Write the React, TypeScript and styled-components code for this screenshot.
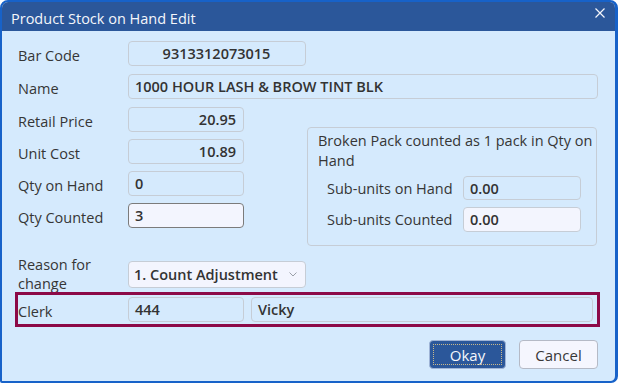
import React from "react";
import styled, { createGlobalStyle } from "styled-components";

const GlobalStyle = createGlobalStyle`
  html, body {
    margin: 0;
    padding: 0;
    background: #ffffff;
  }
  * {
    box-sizing: border-box;
  }
`;

const Window = styled.div`
  width: 618px;
  height: 383px;
  display: flex;
  flex-direction: column;
  border: 2px solid #1762c9;
  border-right-width: 3px;
  border-radius: 8px 8px 7px 2px;
  overflow: hidden;
  background: #d5eafd;
  font-family: "Open Sans", "Noto Sans", sans-serif;
  font-size: 14.5px;
  color: #363636;
`;

const TitleBar = styled.div`
  height: 29px;
  flex: none;
  display: flex;
  align-items: center;
  justify-content: space-between;
  padding: 4px 8px 0 9px;
  background: #2b579a;
  color: #f4f6fb;
  font-size: 14.5px;
`;

const CloseButton = styled.div`
  width: 14px;
  height: 14px;
  display: flex;
  align-items: center;
  justify-content: center;
  margin-top: -12px;
`;

const Body = styled.div`
  flex: 1;
  display: flex;
  flex-direction: column;
  padding: 10px 17px 0 16px;
`;

const Row = styled.div<{ $mt?: number }>`
  display: flex;
  align-items: center;
  gap: 7px;
  margin-top: ${(p) => p.$mt ?? 0}px;
`;

const Label = styled.div<{ $width?: number }>`
  width: ${(p) => p.$width ?? 110}px;
  margin-right: -7px;
  flex: none;
  line-height: 19px;
  padding-top: 3px;
`;

const Field = styled.div<{
  $width?: number;
  $align?: "left" | "center" | "right";
  $editable?: boolean;
  $focused?: boolean;
  $height?: number;
}>`
  width: ${(p) => (p.$width ? `${p.$width}px` : "auto")};
  flex: ${(p) => (p.$width ? "none" : "1")};
  height: ${(p) => p.$height ?? 25}px;
  display: flex;
  align-items: center;
  justify-content: ${(p) =>
    p.$align === "center" ? "center" : p.$align === "right" ? "flex-end" : "flex-start"};
  padding: 0 7px 0 6px;
  border: 1px solid ${(p) => (p.$focused ? "#7b7b7b" : "#c6cdd6")};
  border-radius: 4px;
  background: ${(p) => (p.$editable ? "#f3f5fe" : "#d5eafd")};
  font-weight: 600;
  color: #333333;
`;

const Split = styled.div`
  display: flex;
  align-items: flex-start;
  margin-top: 8px;
`;

const Column = styled.div`
  width: 226px;
  display: flex;
  flex-direction: column;
  gap: 7px;
`;

const GroupBox = styled.fieldset`
  margin: 20px 0 0 63px;
  width: 290px;
  height: 119px;
  padding: 3px 15px 0 10px;
  border: 1px solid #c6cdd6;
  border-radius: 4px;
  display: flex;
  flex-direction: column;
`;

const GroupTitle = styled.div`
  line-height: 20px;
  margin-bottom: 5px;
  margin-right: -22px;
`;

const SubRow = styled.div`
  display: flex;
  align-items: center;
  justify-content: space-between;
  padding-left: 9px;
  margin-bottom: 7px;
`;

const Select = styled(Field)`
  justify-content: space-between;
  padding: 0 8px 0 5px;
  margin-left: 6px;
  margin-top: 3px;
`;

const ClerkBox = styled.div`
  margin: -1px -2px 0 -3px;
  border: 3px solid #8c0a47;
  padding: 2px 4px 2px 0;
  display: flex;
  align-items: center;
  gap: 7px;
`;

const ButtonRow = styled.div`
  display: flex;
  justify-content: flex-end;
  gap: 13px;
  margin-top: 13px;
`;

const Button = styled.button<{ $primary?: boolean }>`
  position: relative;
  height: 29px;
  width: ${(p) => (p.$primary ? 77 : 79)}px;
  border: 1px solid ${(p) => (p.$primary ? "#9fb4d6" : "#b5bac6")};
  border-radius: 4px;
  background: ${(p) => (p.$primary ? "#2b579a" : "#f5f6fe")};
  color: ${(p) => (p.$primary ? "#f6f8fc" : "#383838")};
  font-family: inherit;
  font-size: 15px;
  padding: 0;
  ${(p) =>
    p.$primary &&
    `
    &::after {
      content: "";
      position: absolute;
      inset: 3px;
      border: 1px dotted #c9b98a;
    }
  `}
`;

const Chevron = () => (
  <svg width="8" height="5" viewBox="0 0 8 5">
    <path d="M0.5 0.5 L4 4 L7.5 0.5" fill="none" stroke="#9aa0a8" strokeWidth="1" />
  </svg>
);

const CloseIcon = () => (
  <svg width="10" height="10" viewBox="0 0 10 10">
    <path d="M0.5 0.5 L9.5 9.5 M9.5 0.5 L0.5 9.5" stroke="#f4f6fb" strokeWidth="1.2" />
  </svg>
);

const App = () => {
  const leftRows = [
    { label: "Retail Price", value: "20.95", align: "right" as const },
    { label: "Unit Cost", value: "10.89", align: "right" as const },
    { label: "Qty on Hand", value: "0", align: "left" as const },
    { label: "Qty Counted", value: "3", align: "left" as const, editable: true },
  ];
  return (
    <>
      <GlobalStyle />
      <Window>
        <TitleBar>
          <span>Product Stock on Hand Edit</span>
          <CloseButton>
            <CloseIcon />
          </CloseButton>
        </TitleBar>
        <Body>
          <Row>
            <Label>Bar Code</Label>
            <Field $width={178} $align="center">
              9313312073015
            </Field>
          </Row>
          <Row $mt={8}>
            <Label>Name</Label>
            <Field>1000 HOUR LASH &amp; BROW TINT BLK</Field>
          </Row>
          <Split>
            <Column>
              {leftRows.map((r) => (
                <Row key={r.label}>
                  <Label>{r.label}</Label>
                  <Field
                    $width={116}
                    $align={r.align}
                    $editable={r.editable}
                    $focused={r.editable}
                  >
                    {r.value}
                  </Field>
                </Row>
              ))}
            </Column>
            <GroupBox>
              <GroupTitle>Broken Pack counted as 1 pack in Qty on Hand</GroupTitle>
              <SubRow>
                <span>Sub-units on Hand</span>
                <Field $width={118} $height={24}>
                  0.00
                </Field>
              </SubRow>
              <SubRow>
                <span>Sub-units Counted</span>
                <Field $width={118} $editable>
                  0.00
                </Field>
              </SubRow>
            </GroupBox>
          </Split>
          <Row $mt={6}>
            <Label $width={104}>Reason for change</Label>
            <Select $width={178} $height={27} $editable>
              <span>1. Count Adjustment</span>
              <Chevron />
            </Select>
          </Row>
          <ClerkBox>
            <Label>Clerk</Label>
            <Field $width={116}>444</Field>
            <Field>Vicky</Field>
          </ClerkBox>
          <ButtonRow>
            <Button $primary>Okay</Button>
            <Button>Cancel</Button>
          </ButtonRow>
        </Body>
      </Window>
    </>
  );
};

export default App;
